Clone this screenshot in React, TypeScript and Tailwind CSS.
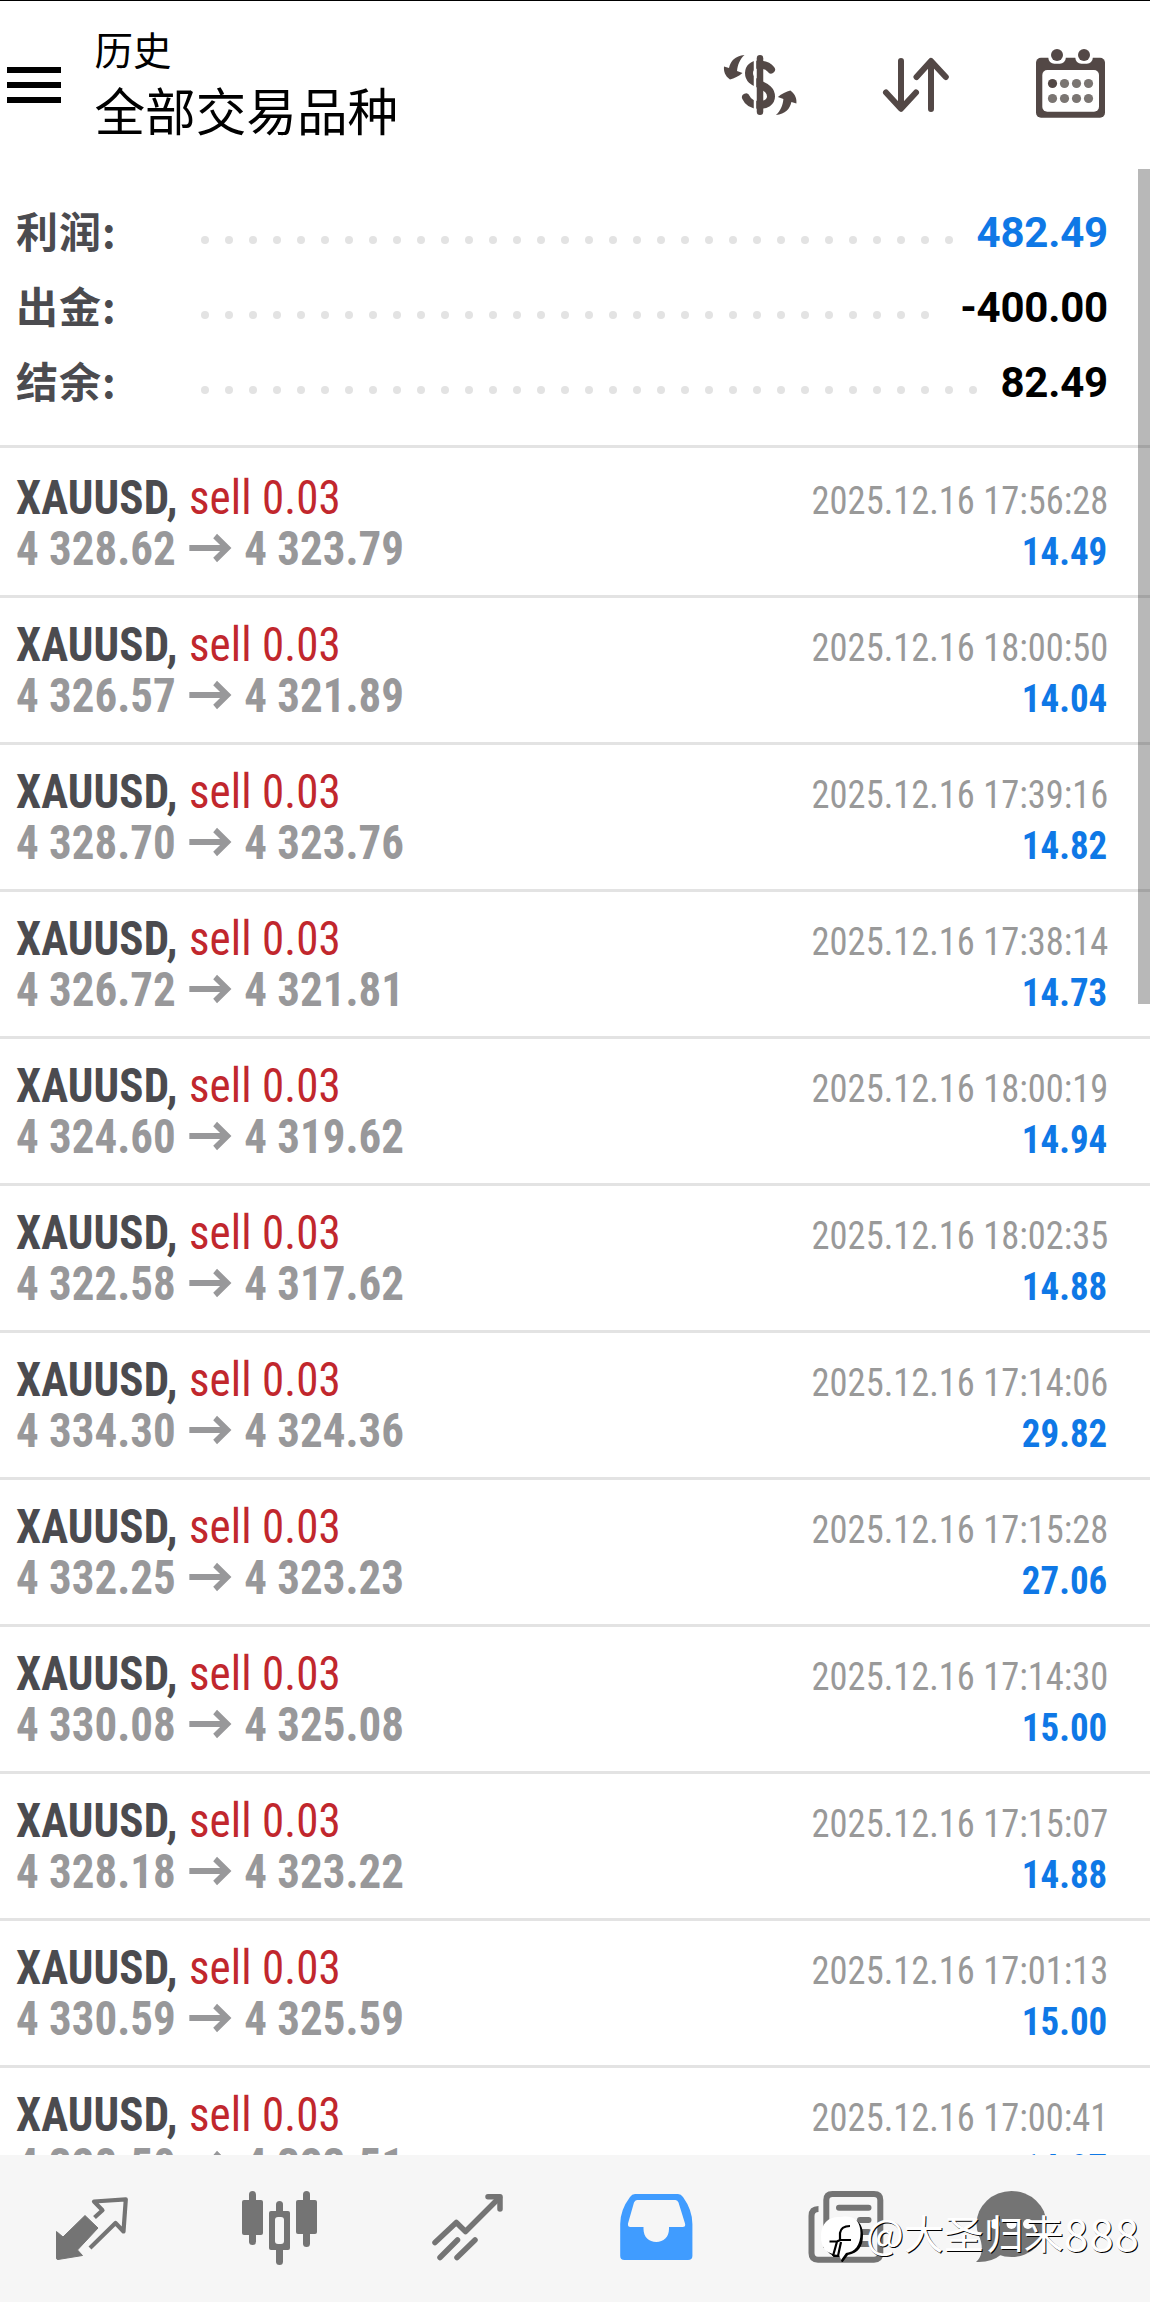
import { ReactNode } from "react";

type Deal = {
  open: string;
  close: string;
  time: string;
  profit: string;
};

const summary = [
  { title: "利润:", value: "482.49", dots: 32, color: "text-[#0f78e6]" },
  { title: "出金:", value: "-400.00", dots: 31, color: "text-black" },
  { title: "结余:", value: "82.49", dots: 33, color: "text-black" },
];

const deals: Deal[] = [
  { open: "4 328.62", close: "4 323.79", time: "2025.12.16 17:56:28", profit: "14.49" },
  { open: "4 326.57", close: "4 321.89", time: "2025.12.16 18:00:50", profit: "14.04" },
  { open: "4 328.70", close: "4 323.76", time: "2025.12.16 17:39:16", profit: "14.82" },
  { open: "4 326.72", close: "4 321.81", time: "2025.12.16 17:38:14", profit: "14.73" },
  { open: "4 324.60", close: "4 319.62", time: "2025.12.16 18:00:19", profit: "14.94" },
  { open: "4 322.58", close: "4 317.62", time: "2025.12.16 18:02:35", profit: "14.88" },
  { open: "4 334.30", close: "4 324.36", time: "2025.12.16 17:14:06", profit: "29.82" },
  { open: "4 332.25", close: "4 323.23", time: "2025.12.16 17:15:28", profit: "27.06" },
  { open: "4 330.08", close: "4 325.08", time: "2025.12.16 17:14:30", profit: "15.00" },
  { open: "4 328.18", close: "4 323.22", time: "2025.12.16 17:15:07", profit: "14.88" },
  { open: "4 330.59", close: "4 325.59", time: "2025.12.16 17:01:13", profit: "15.00" },
  { open: "4 328.50", close: "4 323.51", time: "2025.12.16 17:00:41", profit: "14.97" },
];

const MoneyIcon = () => (
  <svg className="h-[75px] w-[90px]" viewBox="0 0 90 75" fill="none" stroke="#534846">
    <path
      d="M56 24.5C53.5 21 49 19.5 44 19.5C37.5 19.5 34 23 34 28C34 34 38 36.5 44 39C52 42.500 56 45.500 56 51.500C56 57 51 60 44 60C37 60 33 57 31 52.500"
      strokeWidth="8"
      strokeLinecap="round"
    />
    <path d="M40 8V72" stroke="#fff" strokeWidth="2.500" />
    <path d="M45 13.200V66.800" strokeWidth="6.500" strokeLinecap="round" />
    <g fill="#534846" stroke="none">
      <path d="M29.500 10C20 11 15.500 16 14 23L9 21.500C8.500 26 10 31 15 34.500C19 33.500 24 31 27.500 28L22 26C22.500 20 25 14 29.500 10Z" />
      <path transform="rotate(180 45.200 40)" d="M29.500 10C20 11 15.500 16 14 23L9 21.500C8.500 26 10 31 15 34.500C19 33.500 24 31 27.500 28L22 26C22.500 20 25 14 29.500 10Z" />
    </g>
  </svg>
);

const SortIcon = () => (
  <svg
    className="ml-[75px] h-[75px] w-[70px]"
    viewBox="880 45 70 75"
    fill="none"
    stroke="#534846"
    strokeWidth="6"
    strokeLinecap="round"
    strokeLinejoin="round"
  >
    <path d="M901 61V108.500M886 92.500L901 108.700L916 92.500" />
    <path d="M931 109V61.500M916.500 77L931 61L945.800 77" />
  </svg>
);

const CalendarIcon = () => (
  <svg className="ml-[84px] h-[75px] w-[74px]" viewBox="1034 45 74 75">
    <rect x="1036" y="57.700" width="69" height="60" rx="5" fill="#534846" />
    <rect x="1042.300" y="70" width="56.700" height="41.700" rx="5" fill="#fff" />
    <rect x="1048.300" y="46" width="17.500" height="17.700" rx="6" fill="#fff" />
    <rect x="1075.300" y="46" width="17.500" height="17.700" rx="6" fill="#fff" />
    <circle cx="1057" cy="55" r="6" fill="#534846" />
    <circle cx="1084" cy="55" r="6" fill="#534846" />
    <circle cx="1052.500" cy="83.500" r="4.600" fill="#534846" />
    <g fill="#7a7572">
      <circle cx="1064.500" cy="83.500" r="4.600" />
      <circle cx="1076.500" cy="83.500" r="4.600" />
      <circle cx="1088.500" cy="83.500" r="4.600" />
      <circle cx="1052.500" cy="98.500" r="4.600" />
      <circle cx="1064.500" cy="98.500" r="4.600" />
      <circle cx="1076.500" cy="98.500" r="4.600" />
      <circle cx="1088.500" cy="98.500" r="4.600" />
    </g>
  </svg>
);

const Header = () => (
  <header className="flex h-[169px] border-t border-black">
    <button className="mt-[66px] ml-[7px] flex h-9 w-[54px] flex-col justify-between">
      <span className="h-1.5 w-full bg-black"></span>
      <span className="h-1.5 w-full bg-black"></span>
      <span className="h-1.5 w-full bg-black"></span>
    </button>
    <div className="mt-[25px] ml-[33.5px] flex-1 font-['Noto_Sans_CJK_SC',sans-serif] text-black">
      <p className="text-[38.5px] leading-[44px]">历史</p>
      <h1 className="text-[50.6px] leading-[78px]">全部交易品种</h1>
    </div>
    <div className="mt-11 mr-[42px] flex items-start">
      <MoneyIcon />
      <SortIcon />
      <CalendarIcon />
    </div>
  </header>
);

const Summary = () => (
  <section className="border-b-[3px] border-[#e3e3e3] pt-[26px] pb-[25px]">
    {summary.map((row) => (
      <div key={row.title} className="flex h-[75px] items-start pr-[42px] pl-4">
        <span className="w-[184.5px] font-['Noto_Sans_CJK_SC',sans-serif] text-[42px] leading-[69px] font-bold tracking-[1px] text-[#4b4b4f]">
          {row.title}
        </span>
        <div className="mt-[41px] flex flex-1 gap-4">
          {Array.from({ length: row.dots }, (_, i) => (
            <span key={i} className="size-2 rounded-full bg-[#e3e3e3]"></span>
          ))}
        </div>
        <span className={`font-['Roboto',sans-serif] text-[42px] leading-[75px] font-bold tracking-[-0.2px] ${row.color}`}>
          {row.value}
        </span>
      </div>
    ))}
  </section>
);

const DealRow = ({ deal }: { deal: Deal }) => (
  <li className="border-b-[3px] border-[#e3e3e3] py-[21px] pr-[42px] pl-4 font-['Roboto_Condensed',Roboto,sans-serif]">
    <div className="flex h-[51px] items-baseline justify-between">
      <p className="origin-left scale-x-[0.937] text-[48px] leading-[51px]">
        <span className="font-bold tracking-[0.1px] text-[#4b4b4f]">XAUUSD,</span>{" "}
        <span className="ml-px font-[450] tracking-[0.1px] text-[#c1272d]">sell 0.03</span>
      </p>
      <time className="origin-right scale-x-[0.935] text-[39px] leading-[51px] text-[#999999]">{deal.time}</time>
    </div>
    <div className="flex h-[51px] items-baseline justify-between">
      <p className="flex origin-left scale-x-[0.937] text-[48px] leading-[51px] font-bold text-[#98989a]">
        <span>{deal.open}</span>
        <svg className="mx-3 mt-[7px] h-9 w-[49px]" viewBox="0 0 49 36" fill="none" stroke="#98989a" strokeWidth="6">
          <path d="M2 18H42M29.500 6L42.500 18L29.500 30" />
        </svg>
        <span>{deal.close}</span>
      </p>
      <span className="origin-right scale-x-[0.947] pr-px text-[39px] leading-[51px] font-bold text-[#0f78e6]">
        {deal.profit}
      </span>
    </div>
  </li>
);

const NavItem = ({ viewBox, children }: { viewBox: string; children: ReactNode }) => (
  <button className="w-[188px]">
    <svg className="h-[147px] w-[188px]" viewBox={viewBox} fill="none">
      {children}
    </svg>
  </button>
);

const BottomNav = () => (
  <nav className="flex h-[147px] bg-[#f6f6f6]">
    <NavItem viewBox="0 95 188 147">
      <path
        d="M56.500 171.500L63 177L85 155.500L98 168L77.500 190L82.500 195.500L58 199.500Q56.500 199.500 56.500 198Z"
        fill="#747474"
        stroke="#747474"
        strokeLinejoin="round"
      />
      <path d="M94.500 157.500L102.500 150.300L94 141.500L125.800 139.300L123.500 171.500L115.500 163L90 188" stroke="#747474" strokeWidth="4.200" strokeLinejoin="round" />
    </NavItem>
    <NavItem viewBox="188 95 188 147">
      <g fill="#747474">
        <rect x="249" y="131" width="7" height="54" rx="3.500" />
        <rect x="242" y="140" width="21" height="35" rx="2" />
        <rect x="303" y="131" width="7" height="56" rx="3.500" />
        <rect x="296" y="140" width="21" height="34" rx="2" />
        <rect x="276" y="141" width="7" height="64" rx="3.500" />
        <rect x="269" y="151" width="21" height="39" rx="2" />
      </g>
      <rect x="275" y="157" width="9" height="27" rx="3" fill="#f6f6f6" />
    </NavItem>
    <NavItem viewBox="376 95 188 147">
      <g stroke="#747474" strokeWidth="5.500" strokeLinecap="round" strokeLinejoin="round">
        <path d="M435 182.500L456.300 162.500L465.500 171.500L499.500 137.500" />
        <path d="M488 136.800H500V149" />
        <path d="M440 197.500L457.500 180M457 197.500L475 180" />
      </g>
    </NavItem>
    <NavItem viewBox="564 95 188 147">
      <path
        fillRule="evenodd"
        fill="#409cff"
        d="M635 134H678Q681 134 683 137Q692.400 150 692.400 164V196Q692.400 200 688 200H624.500Q620.200 200 620.200 196V164Q620.200 150 630 137Q632 134 635 134ZM637 140Q635 140 634 142.500L628 163.500Q627.500 167 630.500 167H643.500V169C643.500 177 649 182 656.300 182C663.500 182 669 177 669 169V167H682.500Q686 167 685 163.500L678.500 142.500Q677.500 140 675.500 140Z"
      />
    </NavItem>
    <NavItem viewBox="752 95 188 147">
      <g stroke="#747474" strokeWidth="6" strokeLinecap="round">
        <path d="M818.500 149Q811.500 149 811.500 156V193Q811.500 199.700 818 199.700H874Q880.300 199.700 880.300 193V140Q880.300 134 874 134H832.500Q826.300 134 826.300 140V188" strokeLinecap="butt" />
        <path d="M839 147.700H868.500M860 160H868.500M860 172H868.500M839 184H868.500" />
      </g>
    </NavItem>
    <NavItem viewBox="940 95 188 147">
      <ellipse cx="1011.500" cy="164" rx="35" ry="33" fill="#747474" />
      <path d="M980 178Q985 194 976 202Q991 203 1002 194Z" fill="#747474" />
      <g fill="#fff">
        <circle cx="995" cy="164" r="5" />
        <circle cx="1011.500" cy="164" r="5" />
        <circle cx="1028" cy="164" r="5" />
      </g>
    </NavItem>
  </nav>
);

const Watermark = () => (
  <div className="absolute top-[2202px] left-[819px] flex h-[60px] items-center font-['Noto_Sans_CJK_SC',sans-serif] font-normal whitespace-nowrap text-white">
    <svg className="h-[60px] w-[47px] shrink-0" viewBox="0 0 47 60">
      <path d="M24 17C36 15 44 20 44 33C44 45 39 51 29 53L23 61L21 55C9 54 5 47 5 36C5 23 12 16 24 17Z" fill="#000" />
      <path d="M22 15C34 13 41.500 18 41.500 31C41.500 43 36 50 27 51L22 58L20 53C7 52 2 46 2 34C2 21 10 14 22 15Z" fill="#fff" />
      <path d="M14 54L18 39.500H10.500M18 39.500L21 38V31Q22 24 31 24M21 38H32M14 54H19L22 40" fill="none" stroke="#000" strokeWidth="2.200" />
    </svg>
    <span className="text-[40px] leading-[60px] [text-shadow:1px_1px_0_#000]">@大圣归来</span>
    <span className="text-[44px] leading-[60px] tracking-[0.9px] [text-shadow:1px_1px_0_#000]">888</span>
  </div>
);

export default function App() {
  return (
    <div className="relative flex h-[2302px] w-[1150px] flex-col overflow-hidden bg-white">
      <Header />
      <main className="relative h-[1986px] overflow-hidden">
        <Summary />
        <ul className="pt-[3px]">
          {deals.map((deal) => (
            <DealRow key={deal.time} deal={deal} />
          ))}
        </ul>
        {/* scroll thumb */}
        <div className="absolute top-0 right-0 h-[835px] w-3 bg-black/28"></div>
      </main>
      <BottomNav />
      <Watermark />
    </div>
  );
}
